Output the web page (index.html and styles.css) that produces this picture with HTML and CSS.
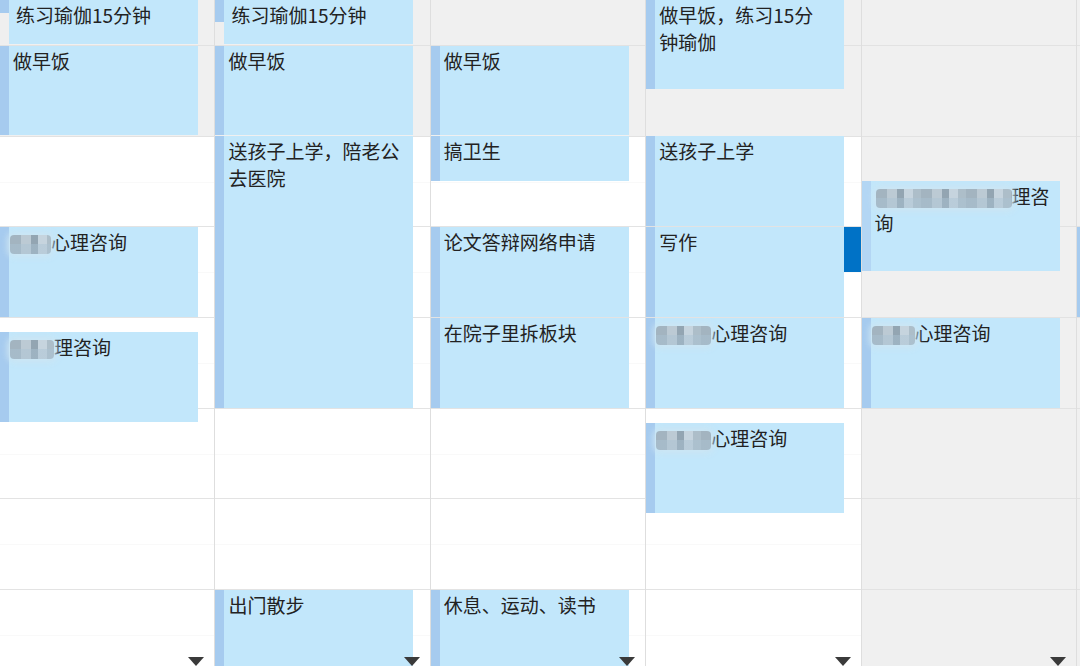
FILE: index.html
```html
<!DOCTYPE html>
<html lang="zh-CN">
<head>
<meta charset="utf-8">
<title>日历 - 周视图</title>
<link rel="stylesheet" href="styles.css">
</head>
<body>
<div class="week">
  <div class="day">
    <div class="row first off"></div>
    <div class="row off"></div>
    <div class="row"></div><div class="row"></div><div class="row"></div><div class="row"></div><div class="row"></div><div class="row"></div>
    <div class="ev short p13" style="top:0;height:44px"><span class="t">练习瑜伽15分钟</span></div>
    <div class="ev" style="top:46px;height:89px">做早饭</div>
    <div class="ev" style="top:227px;height:90px"><span class="mask m41"></span>心理咨询</div>
    <div class="ev" style="top:332px;height:90px"><span class="mask m44"></span>理咨询</div>
    <span class="more"></span>
  </div>
  <div class="day">
    <div class="row first off"></div>
    <div class="row off"></div>
    <div class="row"></div><div class="row"></div><div class="row"></div><div class="row"></div><div class="row"></div><div class="row"></div>
    <div class="ev short p22" style="top:0;height:44px"><span class="t">练习瑜伽15分钟</span></div>
    <div class="ev" style="top:46px;height:89px">做早饭</div>
    <div class="ev" style="top:136px;height:272px">送孩子上学，陪老公去医院</div>
    <div class="ev" style="top:590px;height:90px">出门散步</div>
    <span class="more"></span>
  </div>
  <div class="day">
    <div class="row first off"></div>
    <div class="row off"></div>
    <div class="row"></div><div class="row"></div><div class="row"></div><div class="row"></div><div class="row"></div><div class="row"></div>
    <div class="ev" style="top:46px;height:89px">做早饭</div>
    <div class="ev" style="top:136px;height:45px">搞卫生</div>
    <div class="ev" style="top:227px;height:90px">论文答辩网络申请</div>
    <div class="ev" style="top:318px;height:90px">在院子里拆板块</div>
    <div class="ev" style="top:590px;height:90px">休息、运动、读书</div>
    <span class="more"></span>
  </div>
  <div class="day">
    <div class="row first off"></div>
    <div class="row off"></div>
    <div class="row"></div><div class="row"></div><div class="row"></div><div class="row"></div><div class="row"></div><div class="row"></div>
    <div class="ev" style="top:0;height:89px">做早饭，练习15分钟瑜伽</div>
    <div class="ev" style="top:136px;height:90px">送孩子上学</div>
    <div class="ev" style="top:227px;height:90px">写作</div>
    <div class="ev" style="top:318px;height:90px"><span class="mask m55"></span>心理咨询</div>
    <div class="ev" style="top:423px;height:90px"><span class="mask m55"></span>心理咨询</div>
    <div class="sel" style="top:227px;height:45px"></div>
    <span class="more"></span>
  </div>
  <div class="day weekend">
    <div class="row first off"></div>
    <div class="row off"></div>
    <div class="row off"></div><div class="row off"></div><div class="row off"></div><div class="row off"></div><div class="row off"></div><div class="row off"></div>
    <div class="ev pale" style="top:181px;height:90px"><span class="mask m136"></span>理咨询</div>
    <div class="ev" style="top:318px;height:90px"><span class="mask m42"></span>心理咨询</div>
    <span class="more"></span>
  </div>
  <div class="day weekend">
    <div class="row first off"></div>
    <div class="row off"></div>
    <div class="row off"></div><div class="row off"></div><div class="row off"></div><div class="row off"></div><div class="row off"></div><div class="row off"></div>
    <div class="ev" style="top:227px;height:90px"></div>
  </div>
</div>
</body>
</html>
```

FILE: styles.css
```css
html, body {
  margin: 0;
  padding: 0;
  width: 1080px;
  height: 666px;
  overflow: hidden;
  background: #ffffff;
}

.week {
  display: flex;
  width: 1081px;
  margin-left: -1px;
  height: 666px;
  overflow: hidden;
  font-family: "Noto Sans CJK SC", "Noto Sans", sans-serif;
  font-size: 19px;
  line-height: 27px;
  color: #222222;
}

.day {
  position: relative;
  flex: 0 0 215.4px;
  box-sizing: border-box;
  height: 666px;
  border-left: 1px solid #dedede;
  overflow: hidden;
  display: flex;
  flex-direction: column;
}

.row {
  flex: 0 0 90.7px;
  box-sizing: border-box;
  border-bottom: 1px solid #e3e3e3;
  background:
    linear-gradient(to bottom, transparent 45px, #f9f9f9 45px, #f9f9f9 46px, transparent 46px);
}

.row.first {
  flex-basis: 46px;
  background: none;
}

.row.off {
  background-color: #f0f0f0;
  background-image: none;
  border-bottom-color: #e2e2e2;
}

.ev {
  position: absolute;
  left: 0;
  width: 198px;
  box-sizing: border-box;
  padding: 1px 13px 0 13px;
  background: linear-gradient(to right, #a6cbef 0 9px, #c2e7fb 9px);
  overflow: hidden;
  word-break: break-all;
}

.ev.short .t {
  padding-left: 3px;
}

.ev.p13 {
  background:
    linear-gradient(to bottom, #a6cbef 0 13px, #efefef 13px) left top / 9px 100% no-repeat,
    #c2e7fb;
}

.ev.p22 {
  background:
    linear-gradient(to bottom, #a6cbef 0 22px, #efefef 22px) left top / 9px 100% no-repeat,
    #c2e7fb;
}

.ev.pale {
  padding-right: 5px;
  background: linear-gradient(to right, #b3d6f4 0 9px, #c2e7fb 9px);
}

.mask {
  display: inline-block;
  height: 19px;
  vertical-align: -4px;
  margin-left: -3px;
  border-radius: 4px;
  background:
    linear-gradient(to bottom, transparent 0 9px, rgba(170, 195, 212, 0.45) 9px),
    repeating-linear-gradient(90deg, #a3b4c0 0 11px, #bccad4 11px 21px, #93a5b2 21px 28px, #c6d4de 28px 37px, #adbec9 37px 45px);
  filter: blur(0.7px);
  box-shadow: 0 0 6px 3px rgba(205, 228, 242, 0.9);
}

.m41 { width: 41px; }
.m42 { width: 43px; }
.m44 { width: 44px; }
.m55 { width: 55px; }
.m136 { width: 136px; margin-left: 1px; }

.sel {
  position: absolute;
  left: 198px;
  right: 0;
  background: #0072c6;
}

.more {
  position: absolute;
  right: 10px;
  bottom: 0;
  width: 0;
  height: 0;
  border-left: 8px solid transparent;
  border-right: 8px solid transparent;
  border-top: 9px solid #3a3a3a;
}
```
